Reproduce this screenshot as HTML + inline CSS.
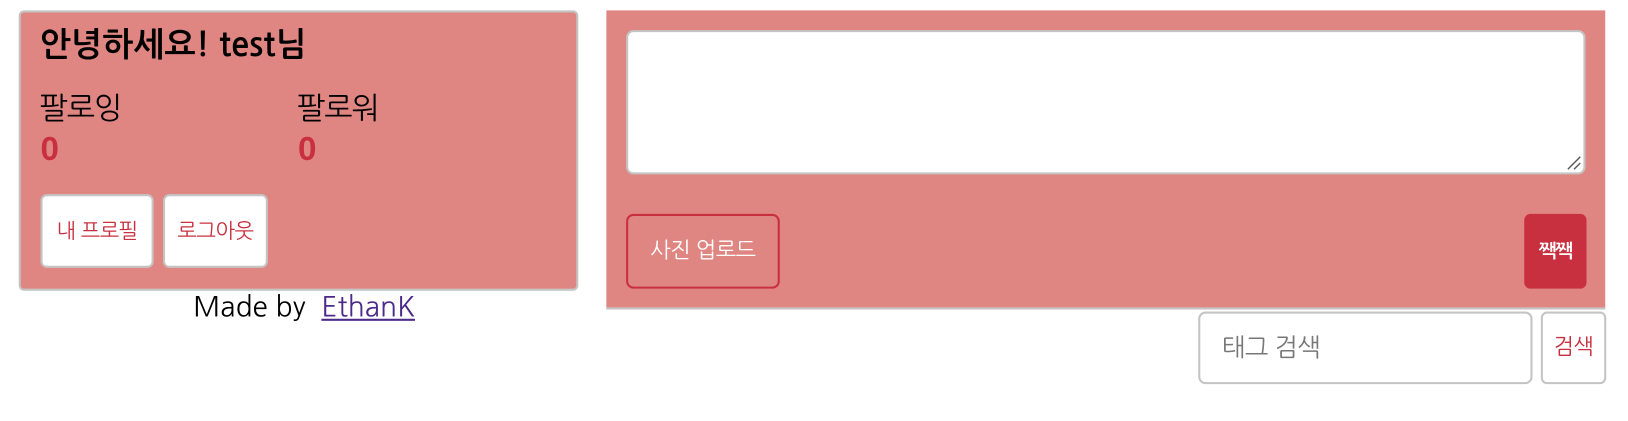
<!DOCTYPE html>
<html><head><meta charset="utf-8"><style>
*{box-sizing:border-box;margin:0;padding:0}
body{width:1628px;height:420px;background:#fff;overflow:hidden;font-family:"NanumGothic","Liberation Sans","Noto Sans CJK KR",sans-serif}
#w{position:absolute;left:0;top:0;width:1568px;height:405px;transform:scale(1.0383);transform-origin:0 0}
.abs{position:absolute}
.card{left:18px;top:10px;width:539px;height:270px;background:#e08682;border:2px solid #c4c4c4;border-radius:5px}
.t{font-size:32px;font-weight:bold;color:#000;white-space:nowrap}
.lbl{font-size:29px;color:#000;letter-spacing:-1px}
.num{font-size:32px;font-weight:bold;color:#c9303f;font-family:"Liberation Sans",sans-serif}
.wbtn{background:#fff;border:2px solid #c4c4c4;border-radius:6px;color:#c9303f;font-size:20px;display:flex;align-items:center;justify-content:center;white-space:nowrap;letter-spacing:-0.5px}
.panel{left:584px;top:10px;width:962px;height:288px;background:#e08682;border-bottom:2px solid #c4c4c4}
</style></head><body><div id="w">
<div class="abs card"></div>
<div class="abs t" style="left:38px;top:27px">안녕하세요! test님</div>
<div class="abs lbl" style="left:38px;top:87px">팔로잉</div>
<div class="abs lbl" style="left:286px;top:87px">팔로워</div>
<div class="abs num" style="left:39px;top:125px">0</div>
<div class="abs num" style="left:287px;top:125px">0</div>
<div class="abs wbtn" style="left:39px;top:187px;width:109px;height:71px">내 프로필</div>
<div class="abs wbtn" style="left:157px;top:187px;width:101px;height:71px">로그아웃</div>
<div class="abs" style="left:186px;top:279px;font-size:27px;color:#000;white-space:nowrap">Made by&nbsp;&nbsp;<span style="color:#4b2a8a;text-decoration:underline">EthanK</span></div>
<div class="abs panel"></div>
<div class="abs" style="left:603px;top:29px;width:924px;height:139px;background:#fff;border:2px solid #c4c4c4;border-radius:7px"></div>
<svg class="abs" style="left:1508px;top:149px" width="16" height="16"><path d="M2 14L14 2M8 14L14 8" stroke="#555" stroke-width="1.3"/></svg>
<div class="abs" style="left:603px;top:206px;width:148px;height:72px;border:2px solid #c9303f;border-radius:7px;color:#fff;font-size:21px;display:flex;align-items:center;justify-content:center;letter-spacing:-0.5px">사진 업로드</div>
<div class="abs" style="left:1468px;top:206px;width:60px;height:72px;background:#c9303f;border-radius:6px;color:#fff;font-size:18px;font-weight:bold;display:flex;align-items:center;justify-content:center;letter-spacing:-1px">짹짹</div>
<div class="abs" style="left:1154px;top:300px;width:322px;height:70px;border:2px solid #c4c4c4;border-radius:7px;color:#777;font-size:24px;padding-left:21px;display:flex;align-items:center;letter-spacing:-0.5px">태그 검색</div>
<div class="abs wbtn" style="left:1484px;top:300px;width:63px;height:70px;font-size:21px">검색</div>
</div></body></html>
